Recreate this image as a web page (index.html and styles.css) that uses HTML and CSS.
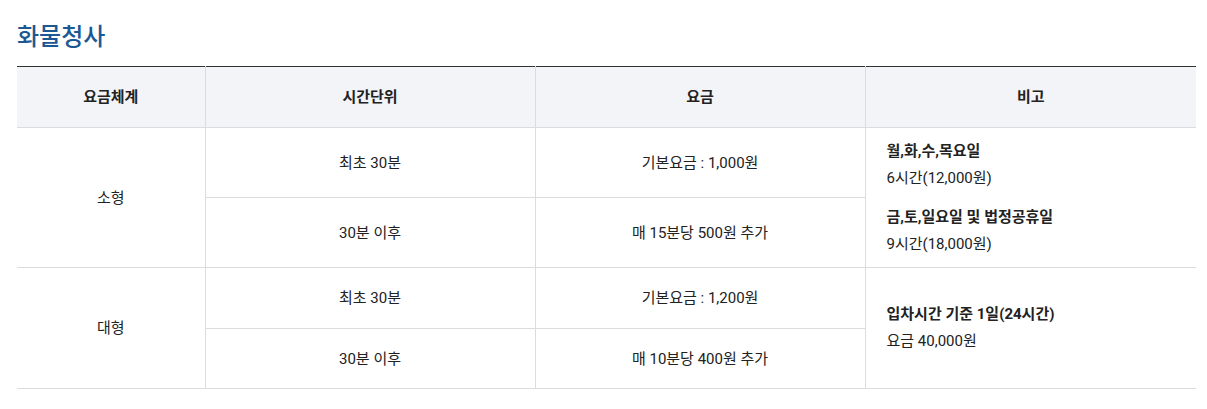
FILE: index.html
```html
<!DOCTYPE html>
<html lang="ko">
<head>
<meta charset="utf-8">
<link rel="stylesheet" href="styles.css">
</head>
<body>
<div class="wrap">
  <h2 class="title">화물청사</h2>
  <table class="fee">
    <colgroup>
      <col class="c1"><col class="c2"><col class="c3"><col class="c4">
    </colgroup>
    <thead>
      <tr class="head"><th>요금체계</th><th>시간단위</th><th>요금</th><th>비고</th></tr>
    </thead>
    <tbody>
      <tr class="r70">
        <td rowspan="2">소형</td>
        <td>최초 30분</td>
        <td>기본요금 : 1,000원</td>
        <td rowspan="2" class="note">
          <p class="b">월,화,수,목요일</p>
          <p>6시간(12,000원)</p>
          <p class="b gap">금,토,일요일 및 법정공휴일</p>
          <p>9시간(18,000원)</p>
        </td>
      </tr>
      <tr class="r70">
        <td>30분 이후</td>
        <td>매 15분당 500원 추가</td>
      </tr>
      <tr class="r61">
        <td rowspan="2">대형</td>
        <td>최초 30분</td>
        <td>기본요금 : 1,200원</td>
        <td rowspan="2" class="note">
          <p class="b">입차시간 기준 1일(24시간)</p>
          <p>요금 40,000원</p>
        </td>
      </tr>
      <tr class="r60">
        <td>30분 이후</td>
        <td>매 10분당 400원 추가</td>
      </tr>
    </tbody>
  </table>
</div>
</body>
</html>
```

FILE: styles.css
```css
* { box-sizing: border-box; }
body {
  margin: 0;
  background: #fff;
  font-family: Roboto, "Noto Sans CJK KR", sans-serif;
  color: #222;
}
.wrap {
  padding: 18px 0 0 17px;
  width: 1196px;
}
.title {
  margin: 0;
  font-size: 24px;
  line-height: 34px;
  font-weight: 500;
  color: #1b5894;
  font-family: "Noto Sans CJK KR", sans-serif;
}
.fee {
  margin-top: 14px;
  width: 1179px;
  border-collapse: collapse;
  table-layout: fixed;
  border-top: 1px solid #333;
  font-size: 15px;
}
.c1 { width: 188px; }
.c2 { width: 330px; }
.c3 { width: 330px; }
.c4 { width: 331px; }
.fee th, .fee td {
  border: 1px solid #dcdcdc;
  text-align: center;
  vertical-align: middle;
  padding: 0;
  line-height: 20px;
}
.fee tr > :first-child { border-left: none; }
.fee tr > :last-child { border-right: none; }
.fee td.note { border-right: none; }
.head th {
  background: #f3f4f7;
  font-weight: 700;
  height: 61px;
  border-top: 1px solid #333;
  color: #222;
}
.r70 td { height: 70px; }
.r61 td { height: 61px; }
.r60 td { height: 60px; }
.note {
  text-align: left !important;
  padding-left: 21px !important;
}
.note p {
  margin: 0;
  line-height: 27px;
}
.note p.b { font-weight: 700; }
.note p.gap { margin-top: 12px; }
```
